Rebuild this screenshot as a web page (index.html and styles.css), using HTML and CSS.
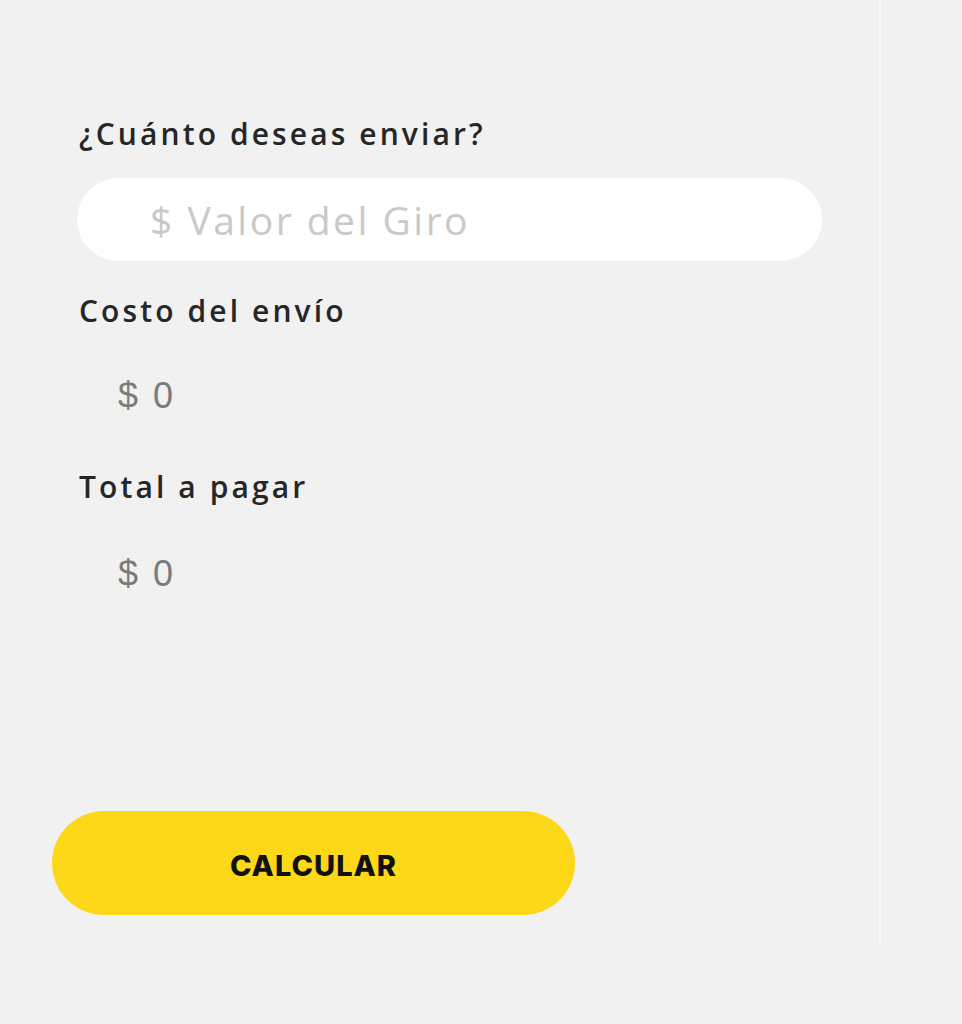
FILE: index.html
```html
<!DOCTYPE html>
<html lang="es">
<head>
<meta charset="utf-8">
<title>Calcular giro</title>
<link rel="stylesheet" href="styles.css">
</head>
<body>
<div class="page">
  <section class="calc">
    <form class="calc-form">
      <label class="field-label label-first" for="valor">¿Cuánto deseas enviar?</label>
      <input class="amount-input" id="valor" type="text" placeholder="$ Valor del Giro">
      <div class="field-label label-cost">Costo del envío</div>
      <div class="value value-cost">$ 0</div>
      <div class="field-label label-total">Total a pagar</div>
      <div class="value value-total">$ 0</div>
      <button class="calc-button" type="button">CALCULAR</button>
    </form>
  </section>
  <aside class="side"></aside>
</div>
</body>
</html>
```

FILE: styles.css
```css
html, body {
  margin: 0;
  padding: 0;
  background: #f1f1f1;
}

.page {
  display: flex;
  min-height: 1024px;
}

.calc {
  width: 881px;
  height: 945px;
  box-sizing: border-box;
  border-right: 2px solid #fbfbfb;
  flex: none;
}

.side {
  flex: 1;
}

.calc-form {
  display: flex;
  flex-direction: column;
  align-items: flex-start;
  padding: 114px 0 0 52px;
}

.field-label {
  font-family: "Open Sans", "DejaVu Sans", sans-serif;
  font-weight: 600;
  font-size: 30px;
  line-height: 40px;
  letter-spacing: 3.1px;
  color: #262626;
  margin-left: 27px;
}

.amount-input {
  margin: 24px 0 0 25px;
  width: 745px;
  height: 83px;
  box-sizing: border-box;
  border: none;
  outline: none;
  border-radius: 42px;
  background: #ffffff;
  padding: 0 0 0 73px;
  font-family: "Open Sans", "DejaVu Sans", sans-serif;
  font-weight: 400;
  font-size: 39px;
  letter-spacing: 2.5px;
  color: #333;
}

.amount-input::placeholder {
  color: #c9c9c9;
}

.label-cost {
  margin-top: 30px;
}

.value {
  font-family: "Liberation Sans", Arial, sans-serif;
  font-size: 36px;
  line-height: 44px;
  color: #7b7b7b;
  margin-left: 66px;
  letter-spacing: 2.5px;
}

.value-cost {
  margin-top: 43px;
}

.label-total {
  margin-top: 49px;
}

.value-total {
  margin-top: 45px;
}

.calc-button {
  margin-top: 215px;
  width: 523px;
  height: 104px;
  border: none;
  border-radius: 52px;
  background: #fdd818;
  font-family: Inter, "Open Sans", sans-serif;
  font-weight: 800;
  font-size: 29px;
  letter-spacing: 1px;
  color: #111;
  padding: 4px 0 0;
}
```
